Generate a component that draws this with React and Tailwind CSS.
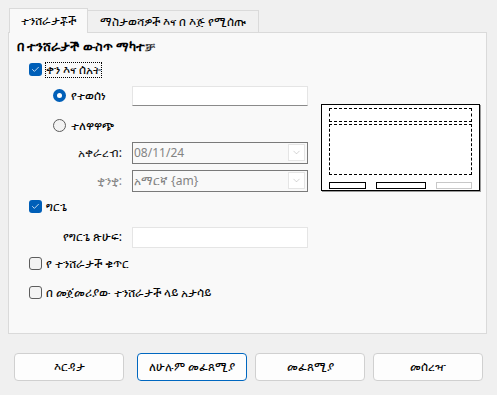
import { ChevronDown, Check } from 'lucide-react';

const font = { fontFamily: '"Noto Sans", "DejaVu Sans", "Liberation Sans", sans-serif' };

function CheckBox({ checked, label, focus }) {
  return (
    <div className="flex items-center gap-[4px] h-[14px]">
      {checked ? (
        <span className="w-[13px] h-[13px] rounded-[3px] bg-[#005fb8] flex items-center justify-center">
          <Check size={9} strokeWidth={2} className="text-white" />
        </span>
      ) : (
        <span className="w-[13px] h-[13px] rounded-[3px] border border-[#5d5d5d] bg-[#f3f3f3]" />
      )}
      <span className={focus ? 'outline-1 outline-dotted outline-black leading-[14px]' : 'leading-[14px]'}>{label}</span>
    </div>
  );
}

function Radio({ checked, label }) {
  return (
    <div className="flex items-center gap-[5px] h-[14px]">
      {checked ? (
        <span className="w-[13px] h-[13px] rounded-full bg-[#005fb8] flex items-center justify-center">
          <span className="w-[5px] h-[5px] rounded-full bg-white" />
        </span>
      ) : (
        <span className="w-[13px] h-[13px] rounded-full border border-[#5d5d5d] bg-[#f3f3f3]" />
      )}
      <span>{label}</span>
    </div>
  );
}

function Combo({ value }) {
  return (
    <div className="w-[176px] h-[22px] border border-[#7a7a7a] bg-[#f9f9f9] flex items-center pl-[1px] pr-[2px]">
      <span className="flex-1 text-[#838383]">{value}</span>
      <span className="w-[17px] h-[17px] border border-[#e5e5e5] bg-white flex items-center justify-center">
        <ChevronDown size={11} strokeWidth={1} className="text-[#a0a0a0]" />
      </span>
    </div>
  );
}

function Preview() {
  return (
    <div className="w-[159px] h-[87px] border border-black bg-white shadow-[1px_1px_0_#999] flex flex-col px-[7px] pt-[3px] pb-[1px] gap-[2px]">
      <div className="h-[15px] border border-dashed border-black" />
      <div className="h-[52px] border border-dashed border-black" />
      <div className="flex justify-between mt-[5px]">
        <div className="w-[37px] h-[7px] border border-black" />
        <div className="w-[50px] h-[7px] border border-black" />
        <div className="w-[36px] h-[7px] border border-[#c8c8c8]" />
      </div>
    </div>
  );
}

function Button({ label, primary, className = '' }) {
  return (
    <button
      className={`w-[110px] h-[28px] rounded-[4px] bg-[#fdfdfd] text-[12px] text-black ${
        primary ? 'border border-[#0067c0]' : 'border border-[#d0d0d0]'
      } ${className}`}
    >
      {label}
    </button>
  );
}

export default function App() {
  return (
    <div style={font} className="w-[497px] h-[395px] bg-[#f0f0f0] text-[12px] text-black relative overflow-hidden">
      <div className="pt-[8px] px-[8px]">
        <div className="flex items-end h-[24px] pl-[1px]">
          <div className="w-[79px] h-[25px] bg-[#f9f9f9] border border-b-0 border-[#dadada] flex items-center justify-center relative z-10 -mb-[1px]">
            ተንሸራታቾች
          </div>
          <div className="w-[171px] h-[22px] bg-[#f0f0f0] border border-b-0 border-l-0 border-[#dadada] flex items-center justify-center">
            ማስታወሻዎች እና በ እጅ የሚሰጡ
          </div>
        </div>
        <div className="w-[479px] h-[302px] bg-[#f9f9f9] border border-[#dadada] relative">
          <div className="pl-[8px] pt-[5px] font-bold text-[12.5px]">በ ተንሸራታች ውስጥ ማካተቻ</div>
          <div className="flex">
            <div className="w-[305px] flex flex-col pl-[20px]">
              <div className="mt-[6px]">
                <CheckBox checked label="ቀን እና ሰአት" focus />
              </div>
              <div className="flex items-center pl-[24px] mt-[8px] h-[22px]">
                <div className="w-[79px]">
                  <Radio checked label="የተወሰነ" />
                </div>
                <div className="w-[176px] h-[20px] border-b border-[#8a8a8a] bg-white border-t border-x border-t-[#e5e5e5] border-x-[#e5e5e5]" />
              </div>
              <div className="pl-[24px] mt-[12px]">
                <Radio label="ተለዋዋጭ" />
              </div>
              <div className="flex items-center mt-[9px]">
                <div className="w-[103px] text-right pr-[10px] text-[#1a1a1a]">አቀራረብ:</div>
                <Combo value="08/11/24" />
              </div>
              <div className="flex items-center mt-[6px]">
                <div className="w-[103px] text-right pr-[10px] text-[#8a8a8a]">ቋንቋ:</div>
                <Combo value="አማርኛ {am}" />
              </div>
              <div className="mt-[8px]">
                <CheckBox checked label="ግርጌ" />
              </div>
              <div className="flex items-center mt-[13px]">
                <div className="w-[103px] text-right pr-[10px]">የግርጌ ጽሁፍ:</div>
                <div className="w-[176px] h-[21px] bg-white border border-[#e5e5e5]" />
              </div>
              <div className="mt-[9px]">
                <CheckBox label="የ ተንሸራታች ቁጥር" />
              </div>
              <div className="mt-[15px]">
                <CheckBox label="በ መጀመሪያው ተንሸራታች ላይ አታሳይ" />
              </div>
            </div>
            <div className="pt-[47px] pl-[7px]">
              <Preview />
            </div>
          </div>
        </div>
      </div>
      <div className="flex gap-[8px] pl-[14px] mt-[19px]">
        <Button label="እርዳታ" />
        <Button label="ለሁሉም መፈጸሚያ" primary className="ml-[5px]" />
        <Button label="መፈጸሚያ" />
        <Button label="መሰረዣ" />
      </div>
    </div>
  );
}
